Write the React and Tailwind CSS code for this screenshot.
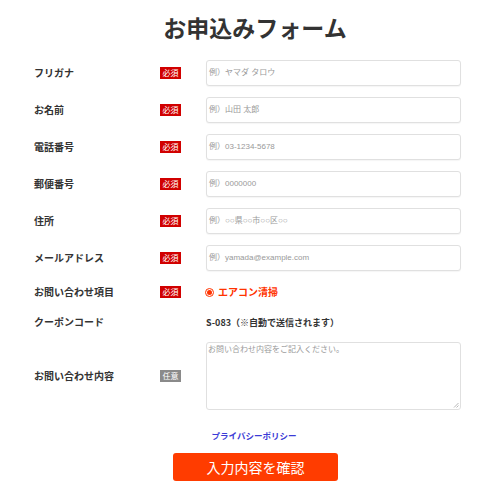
import React from "react";

const font = { fontFamily: '"Noto Sans CJK JP", "Noto Sans", sans-serif' };
const phFont = { fontFamily: '"Liberation Sans", "Noto Sans CJK JP", sans-serif' };

function Badge({ required = true }) {
  return (
    <span
      className={
        "flex h-[12px] w-[21px] shrink-0 items-center justify-center text-[8px] leading-none text-white " +
        (required ? "bg-[#d10000]" : "bg-[#8a8a8a]")
      }
    >
      {required ? "必須" : "任意"}
    </span>
  );
}

function Label({ children }) {
  return (
    <div className="w-[126px] shrink-0 text-[10px] font-bold leading-none text-[#333]">
      {children}
    </div>
  );
}

function InputRow({ label, placeholder }) {
  return (
    <div className="flex h-[26px] items-center">
      <Label>{label}</Label>
      <Badge />
      <div
        className="ml-[25px] flex h-[26px] w-[255px] items-center rounded-[3px] border border-[#e0e0e0] bg-white pl-[2px] text-[8px] text-[#999] shadow-[0_1px_1px_rgba(0,0,0,0.04)]"
        style={phFont}
      >
        {placeholder}
      </div>
    </div>
  );
}

export default function App() {
  return (
    <div className="min-h-[497px] w-[500px] bg-white" style={font}>
      <div className="flex h-[54px] items-center justify-center pl-[10px] text-[23px] font-bold leading-none text-[#333]">
        お申込みフォーム
      </div>
      <div className="mt-[6px] flex flex-col gap-[11px] pl-[34px]">
        <InputRow label="フリガナ" placeholder="例）ヤマダ タロウ" />
        <InputRow label="お名前" placeholder="例）山田 太郎" />
        <InputRow label="電話番号" placeholder="例）03-1234-5678" />
        <InputRow label="郵便番号" placeholder="例）0000000" />
        <InputRow label="住所" placeholder="例）○○県○○市○○区○○" />
        <InputRow label="メールアドレス" placeholder="例）yamada@example.com" />
        <div className="flex h-[20px] items-center">
          <Label>お問い合わせ項目</Label>
          <Badge />
          <div className="ml-[24px] flex items-center gap-[4px]">
            <span className="flex h-[9px] w-[9px] items-center justify-center rounded-full border border-[#ff3300] bg-white">
              <span className="h-[5px] w-[5px] rounded-full bg-[#ff3300]" />
            </span>
            <span className="text-[10px] font-bold leading-none text-[#ff3300]">
              エアコン清掃
            </span>
          </div>
        </div>
        <div className="flex h-[18px] items-center">
          <Label>クーポンコード</Label>
          <div className="ml-[46px] text-[9px] font-bold leading-none text-[#333]">
            S-083（※自動で送信されます）
          </div>
        </div>
        <div className="flex h-[68px] items-center">
          <Label>お問い合わせ内容</Label>
          <Badge required={false} />
          <div
            className="relative ml-[25px] h-[68px] w-[255px] rounded-[3px] border border-[#e0e0e0] bg-white pl-[1px] pt-[1px] text-[8px] leading-[11px] text-[#999]"
            style={phFont}
          >
            お問い合わせ内容をご記入ください。
            <svg
              className="absolute bottom-[1px] right-[1px]"
              width="6"
              height="6"
              viewBox="0 0 6 6"
            >
              <line x1="5.5" y1="1" x2="1" y2="5.5" stroke="#999" strokeWidth="0.7" />
              <line x1="5.5" y1="3.5" x2="3.5" y2="5.5" stroke="#999" strokeWidth="0.7" />
            </svg>
          </div>
        </div>
      </div>
      <div className="mt-[21px] flex justify-center text-[8.5px] font-bold leading-none text-[#3b3bd6]">
        <span className="ml-[8px]">プライバシーポリシー</span>
      </div>
      <div className="mt-[13px] flex justify-center">
        <button className="ml-[11px] flex h-[28px] w-[165px] items-center justify-center rounded-[3px] bg-[#ff3c00] text-[14px] leading-none text-white">
          入力内容を確認
        </button>
      </div>
    </div>
  );
}
